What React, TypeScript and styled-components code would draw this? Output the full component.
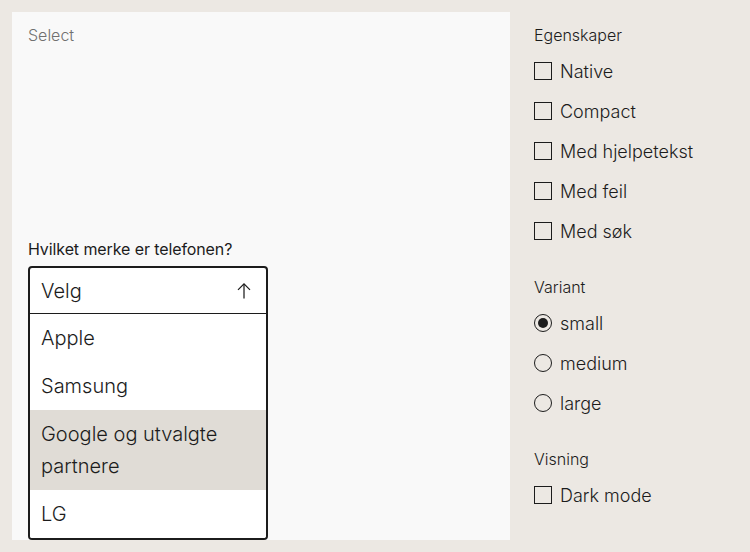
import React from "react";
import styled, { createGlobalStyle } from "styled-components";

const Global = createGlobalStyle`
  html, body { margin: 0; padding: 0; }
  body {
    background: #ece8e3;
    font-family: Inter, "Noto Sans", sans-serif;
    color: #1c1c1c;
    -webkit-font-smoothing: antialiased;
  }
`;

const Page = styled.div`
  display: flex;
  gap: 24px;
  padding: 12px;
  width: 750px;
  height: 552px;
  box-sizing: border-box;
`;

const Preview = styled.section`
  width: 498px;
  height: 528px;
  box-sizing: border-box;
  background: #f9f9f9;
  padding: 12px 16px 35px;
  display: flex;
  flex-direction: column;
`;

const PreviewTitle = styled.div`
  font-size: 16px;
  line-height: 22px;
  font-weight: 300;
  color: #707070;
`;

const Stage = styled.div`
  flex: 1;
  display: flex;
  align-items: center;
`;

const Field = styled.div`
  width: 240px;
  display: flex;
  flex-direction: column;
  gap: 5px;
`;

const Label = styled.label`
  font-size: 16px;
  line-height: 24px;
  font-weight: 400;
  letter-spacing: -0.1px;
  color: #1c1c1c;
`;

const SelectWrap = styled.div`
  position: relative;
`;

const Trigger = styled.div`
  height: 48px;
  box-sizing: border-box;
  border: 2px solid #1c1c1c;
  border-bottom: 1px solid #1c1c1c;
  border-radius: 4px 4px 0 0;
  background: #fff;
  display: flex;
  align-items: center;
  justify-content: space-between;
  padding: 0 12px 0 11px;
  font-size: 20px;
  font-weight: 300;
`;

const Listbox = styled.ul`
  position: absolute;
  top: 100%;
  left: 0;
  right: 0;
  margin: 0;
  padding: 0;
  list-style: none;
  background: #fff;
  border: 2px solid #1c1c1c;
  border-top: 0;
  border-radius: 0 0 4px 4px;
  overflow: hidden;
`;

const Option = styled.li<{ $active?: boolean }>`
  padding: 8px 11px;
  font-size: 20px;
  line-height: 32px;
  font-weight: 300;
  background: ${(p) => (p.$active ? "#e0dcd6" : "#fff")};
`;

const Controls = styled.aside`
  display: flex;
  flex-direction: column;
  gap: 24px;
  padding-top: 11px;
`;

const Group = styled.fieldset`
  border: 0;
  margin: 0;
  padding: 0;
  display: flex;
  flex-direction: column;
`;

const Legend = styled.legend`
  padding: 0;
  font-size: 16px;
  line-height: 24px;
  font-weight: 300;
  margin-bottom: 4px;
`;

const Row = styled.label`
  display: flex;
  align-items: center;
  gap: 8px;
  height: 40px;
  font-size: 18px;
  font-weight: 300;
`;

const Box = styled.span`
  width: 18px;
  height: 18px;
  box-sizing: border-box;
  border: 1.5px solid #1c1c1c;
  flex-shrink: 0;
`;

const Radio = styled.span<{ $checked?: boolean }>`
  width: 18px;
  height: 18px;
  box-sizing: border-box;
  border: 1.5px solid #1c1c1c;
  border-radius: 50%;
  flex-shrink: 0;
  display: flex;
  align-items: center;
  justify-content: center;
  &::after {
    content: "";
    width: 10px;
    height: 10px;
    border-radius: 50%;
    background: #1c1c1c;
    display: ${(p) => (p.$checked ? "block" : "none")};
  }
`;

const ArrowUp = () => (
  <svg width="20" height="20" viewBox="0 0 24 24" fill="none" stroke="#1c1c1c" strokeWidth="1.5" strokeLinecap="butt" strokeLinejoin="miter">
    <path d="M12 3.5V21" />
    <path d="M4.8 10.7L12 3.5L19.2 10.7" />
  </svg>
);

export default function App() {
  const props = ["Native", "Compact", "Med hjelpetekst", "Med feil", "Med søk"];
  const variants = ["small", "medium", "large"];
  return (
    <>
      <Global />
      <Page>
        <Preview>
          <PreviewTitle>Select</PreviewTitle>
          <Stage>
            <Field>
              <Label>Hvilket merke er telefonen?</Label>
              <SelectWrap>
                <Trigger>
                  <span>Velg</span>
                  <ArrowUp />
                </Trigger>
                <Listbox>
                  <Option>Apple</Option>
                  <Option>Samsung</Option>
                  <Option $active>Google og utvalgte partnere</Option>
                  <Option>LG</Option>
                </Listbox>
              </SelectWrap>
            </Field>
          </Stage>
        </Preview>
        <Controls>
          <Group>
            <Legend>Egenskaper</Legend>
            {props.map((p) => (
              <Row key={p}>
                <Box />
                {p}
              </Row>
            ))}
          </Group>
          <Group>
            <Legend>Variant</Legend>
            {variants.map((v, i) => (
              <Row key={v}>
                <Radio $checked={i === 0} />
                {v}
              </Row>
            ))}
          </Group>
          <Group>
            <Legend>Visning</Legend>
            <Row>
              <Box />
              Dark mode
            </Row>
          </Group>
        </Controls>
      </Page>
    </>
  );
}
